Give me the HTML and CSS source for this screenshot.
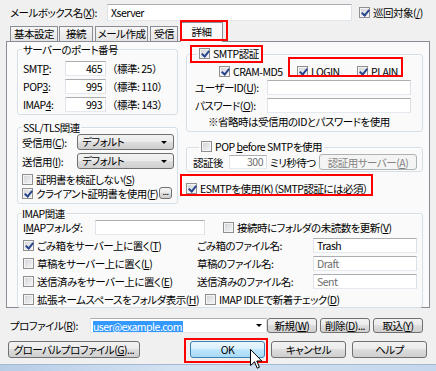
FILE: index.html
```html
<!DOCTYPE html>
<html lang="ja">
  <head>
    <meta charset="UTF-8" />
    <meta name="viewport" content="width=device-width, initial-scale=1.0" />
    <title>詳細</title>
    <link rel="stylesheet" href="styles.css">
  </head>
  <body>
    <div class="dlg">
      <div class="namerow">
        <span>メールボックス名(<u>X</u>):</span>
        <span class="edit">Xserver</span>
        <span class="chk"><i class="cb on"></i>巡回対象(<u>/</u>)</span>
      </div>

      <div class="tabs">
        <span class="tab t1">基本設定</span>
        <span class="tab t2">接続</span>
        <span class="tab t3">メール作成</span>
        <span class="tab t4">受信</span>
        <span class="tab sel">詳細</span>
      </div>

      <div class="page">
        <div class="cols">
          <div class="col">
            <fieldset class="grp port">
              <legend>サーバーのポート番号</legend>
              <div class="portgrid">
                <span>SMT<u>P</u>:</span><span class="edit num">465</span><span class="std">（標準: 25）</span>
                <span>POP<u>3</u>:</span><span class="edit num">995</span><span class="std">（標準: 110）</span>
                <span>IMAP<u>4</u>:</span><span class="edit num">993</span><span class="std">（標準: 143）</span>
              </div>
            </fieldset>

            <fieldset class="grp ssl">
              <legend>SSL/TLS関連</legend>
              <div class="sslrow"><span>受信用(<u>C</u>):</span><span class="combo">デフォルト</span></div>
              <div class="sslrow"><span>送信用(<u>I</u>):</span><span class="combo">デフォルト</span></div>
              <div class="chkrow"><span class="chk"><i class="cb"></i>証明書を検証しない(<u>S</u>)</span></div>
              <div class="chkrow cert">
                <span class="chk"><i class="cb on"></i>クライアント証明書を使用(<u>F</u>)</span>
                <span class="btn tiny">...</span>
              </div>
            </fieldset>
          </div>

          <div class="col right">
            <fieldset class="grp smtp">
              <legend><span class="chk"><i class="cb on"></i>SMTP認証</span></legend>
              <div class="authrow">
                <span></span>
                <span class="chk"><i class="cb on"></i>CRAM-MD5</span>
                <span class="chk"><i class="cb on"></i>LOGIN</span>
                <span class="chk"><i class="cb on"></i>PLAIN</span>
              </div>
              <div class="fieldrow"><span>ユーザーID(<u>U</u>):</span><span class="edit"></span></div>
              <div class="fieldrow"><span>パスワード(<u>O</u>):</span><span class="edit"></span></div>
              <div class="note">※省略時は受信用のIDとパスワードを使用</div>
            </fieldset>

            <fieldset class="grp pop">
              <legend><span class="chk"><i class="cb"></i>POP&nbsp;<u>b</u>efore SMTPを使用</span></legend>
              <div class="poprow">
                <span>認証後</span>
                <span class="edit num off">300</span>
                <span class="wait">ミリ秒待つ</span>
                <span class="btn off">認証用サーバー(<u>A</u>)</span>
              </div>
            </fieldset>

            <div class="esmtp"><span class="chk"><i class="cb on"></i>ESMTPを使用(<u>K</u>)（SMTP認証には必須）</span></div>
          </div>
        </div>

        <fieldset class="grp imap">
          <legend>IMAP関連</legend>
          <div class="imapgrid">
            <div class="wide first">
              <span class="flabel">I<u>M</u>APフォルダ:</span>
              <span class="edit folder"></span>
              <span class="chk unread"><i class="cb"></i>接続時にフォルダの未読数を更新(<u>V</u>)</span>
            </div>

            <span class="chk"><i class="cb on"></i>ごみ箱をサーバー上に置く(<u>T</u>)</span>
            <span>ごみ箱のファイル名:</span>
            <span class="edit">Trash</span>

            <span class="chk"><i class="cb"></i>草稿をサーバー上に置く(<u>L</u>)</span>
            <span>草稿のファイル名:</span>
            <span class="edit off">Draft</span>

            <span class="chk"><i class="cb"></i>送信済みをサーバー上に置く(<u>E</u>)</span>
            <span>送信済みのファイル名:</span>
            <span class="edit off">Sent</span>

            <div class="wide last">
              <span class="chk ns"><i class="cb"></i>拡張ネームスペースをフォルダ表示(<u>H</u>)</span>
              <span class="chk"><i class="cb"></i>IMAP IDLEで新着チェック(<u>D</u>)</span>
            </div>
          </div>
        </fieldset>
      </div>

      <div class="profrow">
        <span class="plabel">プロファイル(<u>R</u>):</span>
        <span class="pcombo"><span class="hl">user@example.com</span></span>
        <span class="btn sm">新規(<u>W</u>)</span>
        <span class="btn sm">削除(<u>D</u>)...</span>
        <span class="btn sm">取込(<u>Y</u>)</span>
      </div>

      <div class="btnrow">
        <span class="btn global">グローバルプロファイル(<u>G</u>)...</span>
        <span class="btn big def">OK</span>
        <span class="btn big">キャンセル</span>
        <span class="btn big">ヘルプ</span>
      </div>

      <div class="frame"></div>

      <div class="mark m-tab"></div>
      <div class="mark m-smtp"></div>
      <div class="mark m-auth"></div>
      <div class="mark m-esmtp"></div>
      <div class="mark m-ok"></div>

      <svg class="cursor" width="13" height="21" viewBox="0 0 13 21">
        <path d="M0.5 0.5 L0.5 16.5 L4.5 12.8 L7.2 19.2 L9.4 18.2 L6.8 12 L11.8 12 Z" fill="#fff" stroke="#000" stroke-width="1" stroke-linejoin="miter" />
      </svg>
    </div>
  </body>
</html>
```

FILE: styles.css
```css
* {
  box-sizing: border-box;
}
body {
  margin: 0;
  background: #f0f0f0;
  color: #000;
  font: 10.5px/13px "Noto Sans CJK JP", "Noto Sans", sans-serif;
  font-feature-settings: "palt";
  letter-spacing: -0.5px;
}
u {
  text-decoration: underline;
  text-underline-offset: 1px;
}
i {
  font-style: normal;
}
.dlg {
  position: relative;
  width: 436px;
  height: 371px;
  overflow: hidden;
  white-space: nowrap;
}

/* common controls */
.edit {
  display: block;
  height: 15px;
  padding: 0 3px;
  line-height: 13px;
  background: #fff;
  border: 1px solid;
  border-color: #abadb3 #dbdfe6 #e3e9ef #e2e3ea;
  overflow: hidden;
}
.edit.num {
  text-align: right;
}
.edit.off {
  color: #6d6d6d;
}
.chk {
  display: inline-flex;
  align-items: center;
}
.cb {
  position: relative;
  display: inline-block;
  flex: none;
  width: 11px;
  height: 11px;
  margin-right: 3px;
  border: 1px solid #8f8f8f;
  background: linear-gradient(135deg, #cfd2d6, #f7f7f7);
  box-shadow: inset 0 0 0 1px #f4f4f4;
}
.cb.on::after {
  content: "";
  position: absolute;
  left: 3px;
  top: 0;
  width: 3px;
  height: 6px;
  border: solid #29448c;
  border-width: 0 2px 2px 0;
  transform: rotate(40deg);
}
.btn {
  display: inline-flex;
  align-items: center;
  justify-content: center;
  height: 16px;
  border: 1px solid #707070;
  border-radius: 3px;
  background: linear-gradient(#f2f2f2, #ebebeb 50%, #dddddd 50%, #cfcfcf);
}
.btn.off {
  color: #838383;
  border-color: #adb2b5;
  background: #f4f4f4;
}
.combo {
  position: relative;
  display: block;
  height: 16px;
  padding: 0 4px;
  line-height: 14px;
  border: 1px solid #707070;
  border-radius: 3px;
  background: linear-gradient(#f2f2f2, #ebebeb 50%, #dddddd 50%, #cfcfcf);
}
.combo::after {
  content: "";
  position: absolute;
  right: 6px;
  top: 6px;
  border: solid transparent;
  border-top-color: #000;
  border-width: 3px 3px 0;
}

/* name row */
.namerow {
  display: grid;
  grid-template-columns: 97px 245px auto;
  align-items: center;
  height: 21px;
  padding: 4px 0 0 10px;
}
.namerow .edit {
  height: 17px;
  line-height: 15px;
}
.namerow .chk {
  margin-left: 7px;
}

/* tabs */
.tabs {
  display: flex;
  align-items: flex-end;
  height: 20px;
  padding-left: 10px;
}
.tab {
  height: 15px;
  margin-right: 2px;
  border: 1px solid #898c95;
  border-bottom: none;
  background: linear-gradient(#f6f6f6, #e4e4e4);
  text-align: center;
  line-height: 14px;
}
.t1 { width: 48px; margin-right: 1px; }
.t2 { width: 34px; }
.t3 { width: 53px; }
.t4 { width: 28px; }
.tab.sel {
  position: relative;
  z-index: 1;
  width: 43px;
  height: 20px;
  margin-bottom: -1px;
  background: #fafafa;
  line-height: 18px;
}

/* tab page */
.page {
  width: 424px;
  height: 267px;
  margin-left: 6px;
  padding: 1px 6px 0 10px;
  border: 1px solid #898c95;
  background: #fafafa;
}
.cols {
  display: grid;
  grid-template-columns: 161px 237px;
  column-gap: 8px;
}
.grp {
  min-width: 0;
  margin: 0;
  padding: 0 3px 0 4px;
  border: 1px solid #d5dfe5;
  border-radius: 3px;
  box-shadow: inset 1px 1px 0 #fff;
}
.grp legend {
  padding: 0 1px;
  line-height: 13px;
}

.portgrid {
  display: grid;
  grid-template-columns: 42px 41px auto;
  grid-auto-rows: 15px;
  row-gap: 3px;
  align-items: center;
  padding: 5px 0 2px 1px;
}
.std {
  margin-left: 1px;
  font-feature-settings: normal;
}

.ssl {
  margin-top: 6px;
  padding-bottom: 3px;
}
.sslrow {
  display: grid;
  grid-template-columns: 55px 97px;
  align-items: center;
  height: 16px;
  margin-bottom: 3px;
}
.chkrow {
  display: flex;
  align-items: center;
  height: 14px;
}
.cert {
  justify-content: space-between;
  padding-right: 2px;
}
.btn.tiny {
  width: 13px;
  height: 12px;
  font-size: 9px;
  line-height: 8px;
  align-items: flex-end;
  padding-bottom: 2px;
}

/* right column */
.right .smtp {
  margin-top: 4px;
  padding: 0 4px 3px 8px;
}
.right legend {
  margin-left: 2px;
  padding: 0 2px;
}
.authrow {
  display: grid;
  grid-template-columns: 24px 78px 60px auto;
  align-items: center;
  height: 14px;
  margin-top: 3px;
}
.fieldrow {
  display: grid;
  grid-template-columns: 72px 144px;
  align-items: center;
  height: 15px;
  margin-top: 2px;
}
.fieldrow + .fieldrow {
  margin-top: 3px;
}
.note {
  margin-top: 2px;
  padding-left: 13px;
}
.pop {
  margin-top: 8px;
  padding: 0 4px 1px 8px;
}
.pop legend {
  margin-left: 4px;
}
.poprow {
  display: grid;
  grid-template-columns: 36px 38px 52px 98px;
  align-items: center;
  height: 16px;
  margin-left: -2px;
}
.poprow .edit {
  height: 14px;
  line-height: 12px;
}
.wait {
  margin-left: 3px;
}
.esmtp {
  margin-top: 10px;
  height: 13px;
}

/* IMAP */
.imap {
  margin-top: 3px;
  padding: 0 5px;
}
.imap legend {
  margin-left: -2px;
}
.imapgrid {
  display: grid;
  grid-template-columns: 174px 116px 104px;
  grid-auto-rows: 15px;
  row-gap: 3px;
  align-items: center;
}
.imapgrid .edit {
  height: 15px;
}
.wide {
  grid-column: 1 / -1;
  display: flex;
  align-items: center;
}
.flabel {
  width: 72px;
}
.edit.folder {
  width: 110px;
}
.unread {
  margin-left: 18px;
}
.ns {
  width: 182px;
}
.imapgrid .last {
  height: 13px;
}

/* profile row and buttons */
.profrow {
  display: flex;
  align-items: center;
  height: 15px;
  margin-top: 10px;
  padding-left: 10px;
}
.plabel {
  width: 80px;
}
.pcombo {
  position: relative;
  width: 177px;
  height: 15px;
  padding: 1px 2px;
  background: #fff;
  border: 1px solid;
  border-color: #abadb3 #dbdfe6 #e3e9ef #e2e3ea;
}
.pcombo::after {
  content: "";
  position: absolute;
  right: 4px;
  top: 5px;
  border: solid transparent;
  border-top-color: #000;
  border-width: 3px 3px 0;
}
.hl {
  display: inline-block;
  height: 11px;
  padding-right: 1px;
  line-height: 11px;
  background: #3399ff;
  color: #fff;
}
.btn.sm {
  width: 50px;
  height: 15px;
}
.profrow .btn.sm:first-of-type {
  margin-left: 3px;
}
.btn.sm + .btn.sm {
  margin-left: 3px;
}
.btnrow {
  display: flex;
  align-items: center;
  height: 17px;
  margin-top: 8px;
  padding-left: 8px;
}
.btn.global {
  width: 132px;
  height: 17px;
}
.btn.big {
  width: 75px;
  height: 17px;
  margin-left: 6px;
}
.btn.def {
  margin-left: 50px;
  border-color: #3c7fb1;
  background: linear-gradient(#eaf6fd, #d9f0fc 50%, #bee6fd 50%, #a7d9f5);
}
.frame {
  height: 7px;
  margin-top: 6px;
  border-top: 1px solid #a4b9d1;
  background: linear-gradient(90deg, #b7cde6, #d3e2f2 40%, #c4d7ec);
}

/* red annotations */
.mark {
  position: absolute;
  border: 2px solid #f00;
  z-index: 2;
}
.m-tab { left: 180px; top: 20px; width: 48px; height: 21px; }
.m-smtp { left: 190px; top: 45px; width: 73px; height: 18px; }
.m-auth { left: 288px; top: 57px; width: 115px; height: 20px; }
.m-esmtp { left: 180px; top: 174px; width: 193px; height: 22px; }
.m-ok { left: 184px; top: 338px; width: 84px; height: 25px; }

.cursor {
  position: absolute;
  left: 250px;
  top: 349px;
  z-index: 3;
}
```
